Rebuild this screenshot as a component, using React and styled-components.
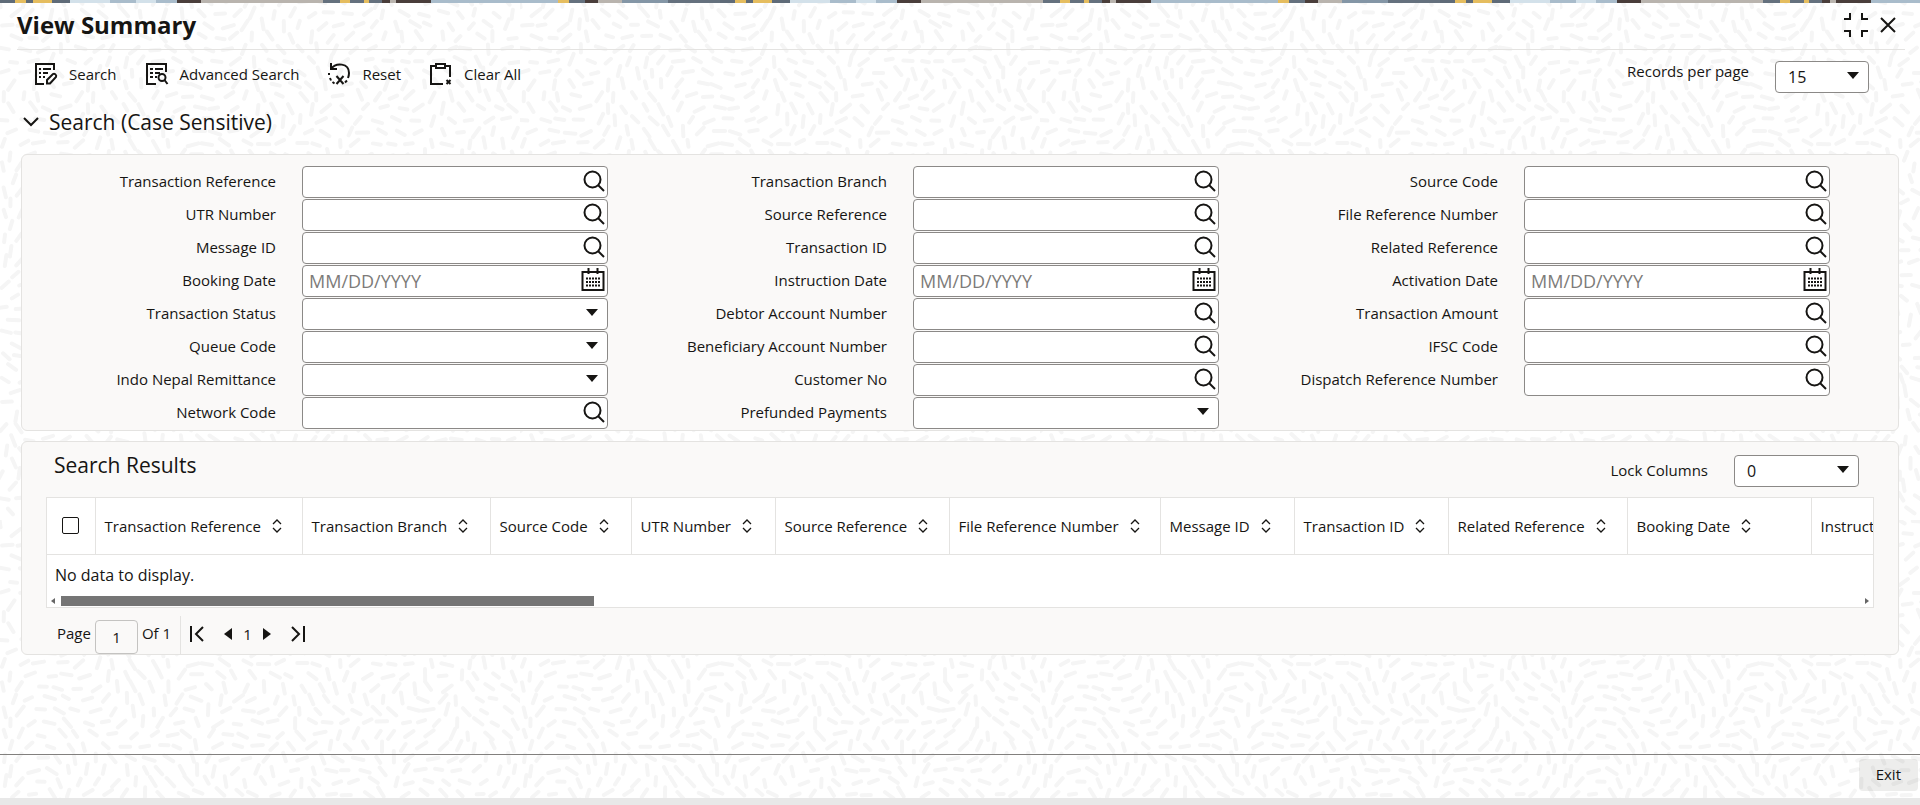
import { useState } from "react";
import styled, { createGlobalStyle, css } from "styled-components";

const ink = "#161513";
const line = "#e4e3e1";

// Paper texture: short strokes that follow a smooth direction field.
// The field is periodic, so the tile repeats without a seam.
const buildTexture = (size) => {
  let seed = 7;
  const random = () => {
    seed = (seed * 16807) % 2147483647;
    return seed / 2147483647;
  };
  const turn = (Math.PI * 2) / size;
  const step = size / 36;
  const strokes = [];
  for (let row = 0; row < 44; row++) {
    for (let col = 0; col < 28; col++) {
      const x = ((col + 0.5 * (row % 2) + random() * 0.4) * size) / 28;
      const y = ((row + random() * 0.3) * size) / 44;
      const angle =
        1.7 * Math.sin(turn * (x + 2 * y)) +
        1.3 * Math.cos(turn * (3 * x - y)) +
        0.7 * Math.sin(turn * (2 * x + 3 * y)) +
        (random() - 0.5) * 0.4;
      const half = step * (0.24 + random() * 0.16);
      const dx = Math.cos(angle) * half;
      const dy = Math.sin(angle) * half;
      strokes.push(
        `M${(x - dx).toFixed(1)} ${(y - dy).toFixed(1)}L${(x + dx).toFixed(1)} ${(y + dy).toFixed(1)}`
      );
    }
  }
  const svg = `<svg xmlns="http://www.w3.org/2000/svg" width="${size}" height="${size}"><path d="${strokes.join("")}" fill="none" stroke="#f5f5f5" stroke-width="4" stroke-linecap="round"/></svg>`;
  return `url("data:image/svg+xml,${encodeURIComponent(svg)}")`;
};

const texture = buildTexture(520);

const searchFields = [
  ["Transaction Reference", "lookup"],
  ["Transaction Branch", "lookup"],
  ["Source Code", "lookup"],
  ["UTR Number", "lookup"],
  ["Source Reference", "lookup"],
  ["File Reference Number", "lookup"],
  ["Message ID", "lookup"],
  ["Transaction ID", "lookup"],
  ["Related Reference", "lookup"],
  ["Booking Date", "date"],
  ["Instruction Date", "date"],
  ["Activation Date", "date"],
  ["Transaction Status", "select"],
  ["Debtor Account Number", "lookup"],
  ["Transaction Amount", "lookup"],
  ["Queue Code", "select"],
  ["Beneficiary Account Number", "lookup"],
  ["IFSC Code", "lookup"],
  ["Indo Nepal Remittance", "select"],
  ["Customer No", "lookup"],
  ["Dispatch Reference Number", "lookup"],
  ["Network Code", "lookup"],
  ["Prefunded Payments", "select"],
];

const columns = [
  ["Transaction Reference", 207],
  ["Transaction Branch", 188],
  ["Source Code", 141],
  ["UTR Number", 144],
  ["Source Reference", 174],
  ["File Reference Number", 211],
  ["Message ID", 134],
  ["Transaction ID", 154],
  ["Related Reference", 179],
  ["Booking Date", 184],
  ["Instruction Date", 190],
];

const Icon = ({ width = 24, height = 24, children, ...rest }) => (
  <svg
    width={width}
    height={height}
    viewBox={`0 0 ${width} ${height}`}
    fill="none"
    stroke="currentColor"
    strokeWidth="2"
    aria-hidden="true"
    {...rest}
  >
    {children}
  </svg>
);

const SearchListIcon = () => (
  <Icon>
    <path d="M20 8V2H2v20h8" />
    <path d="M5 7h2M9 7h8M5 11h2M9 11h5M5 15h2M9 15h2" />
    <path d="M13 21.500v-3.500l6-6c1.500-1 4 1 3 3l-6 6.500z" />
  </Icon>
);

const AdvancedSearchIcon = () => (
  <Icon>
    <path d="M21 10V2H2v20h9" />
    <path d="M5 7h3M10 7h8M5 11h3M10 11h5M5 15h3M10 15h2" />
    <circle cx="17" cy="15.500" r="3.500" />
    <path d="M19.500 18l3 4" />
  </Icon>
);

const ResetIcon = () => (
  <Icon>
    <path d="M4 1v6h6" />
    <path d="M4 7C9 0 22 1 22 11c0 2-.4 3.500-1 5" />
    <path d="M20 18.500l-2 2" />
    <path d="M2 11v2M3 16l1 2.500M5.500 20l2 1.500" />
    <path d="M9.500 14l7 8M16.500 14l-7 8" />
  </Icon>
);

const ClearIcon = () => (
  <Icon>
    <path d="M7 4H2v18h12M16 4h5v11" />
    <rect x="7" y="2" width="9" height="4" />
    <path d="M17.500 18l4 4M21.500 18l-4 4" />
  </Icon>
);

const LookupIcon = () => (
  <Icon width={22} height={22}>
    <circle cx="9.500" cy="9.500" r="8" />
    <path d="M15 15l6 6" />
  </Icon>
);

const CalendarIcon = () => (
  <Icon>
    <path d="M1.500 4h21v18h-21z" />
    <path d="M7.500 0v6M16.500 0v6" />
    <path d="M5 10.500h14M5 14h14M5 17.500h14" strokeDasharray="2 1" />
  </Icon>
);

const SortIcon = () => (
  <Icon width={10} height={14} strokeWidth="1.300">
    <path d="M1 5l4-4 4 4M1 9l4 4 4-4" />
  </Icon>
);

const Triangle = ({ back, width = 8, height = 12 }) => (
  <Icon width={width} height={height} fill="currentColor" stroke="none">
    <path
      d={
        back
          ? `M${width} 0v${height}L0 ${height / 2}z`
          : `M0 0v${height}l${width}-${height / 2}z`
      }
    />
  </Icon>
);

const Field = ({ label, type }) => {
  const id = label.toLowerCase().replaceAll(" ", "-");
  return (
    <FieldRow>
      <FieldLabel htmlFor={id}>{label}</FieldLabel>
      {type === "select" ? (
        <Select id={id} defaultValue="">
          <option value=""></option>
        </Select>
      ) : (
        <InputBox>
          <input
            id={id}
            type="text"
            placeholder={type === "date" ? "MM/DD/YYYY" : undefined}
          />
          <IconButton type="button" aria-label={`${label} ${type}`}>
            {type === "date" ? <CalendarIcon /> : <LookupIcon />}
          </IconButton>
        </InputBox>
      )}
    </FieldRow>
  );
};

const ResultsTable = () => (
  <TableFrame>
    <TableClip>
      <Table>
        <colgroup>
          <col width={48} />
          {columns.map(([name, width]) => (
            <col key={name} width={width} />
          ))}
        </colgroup>
        <thead>
          <tr>
            <CheckCell>
              <input type="checkbox" aria-label="Select all rows" />
            </CheckCell>
            {columns.map(([name]) => (
              <HeadCell key={name}>
                <SortButton>
                  {name}
                  <SortIcon />
                </SortButton>
              </HeadCell>
            ))}
          </tr>
        </thead>
        <tbody>
          <tr>
            <EmptyCell colSpan={columns.length + 1}>
              No data to display.
            </EmptyCell>
          </tr>
        </tbody>
      </Table>
    </TableClip>
    <Scrollbar>
      <Triangle back width={4} height={6} />
      <Track>
        <Thumb />
      </Track>
      <Triangle width={4} height={6} />
    </Scrollbar>
  </TableFrame>
);

const App = () => {
  const [open, setOpen] = useState(true);

  return (
    <>
      <GlobalStyle />
      <Screen>
        <Ribbon />
        <Header>
          <h1>View Summary</h1>
          <WindowButtons>
            <IconButton aria-label="Restore">
              <Icon width={26} height={26}>
                <path d="M1 7h6V1M19 1v6h6M1 19h6v6M19 25v-6h6" />
              </Icon>
            </IconButton>
            <IconButton aria-label="Close">
              <Icon width={16} height={16}>
                <path d="M1 1l14 14M15 1L1 15" />
              </Icon>
            </IconButton>
          </WindowButtons>
        </Header>

        <Toolbar>
          <ToolButton>
            <SearchListIcon />
            Search
          </ToolButton>
          <ToolButton>
            <AdvancedSearchIcon />
            Advanced Search
          </ToolButton>
          <ToolButton>
            <ResetIcon />
            Reset
          </ToolButton>
          <ToolButton>
            <ClearIcon />
            Clear All
          </ToolButton>
          <RecordsPicker>
            <label htmlFor="records">Records per page</label>
            <Select id="records" $width={94} defaultValue="15">
              <option>15</option>
              <option>30</option>
            </Select>
          </RecordsPicker>
        </Toolbar>

        <SectionToggle aria-expanded={open} onClick={() => setOpen(!open)}>
          <Icon width={16} height={10}>
            <path d="M1 1l7 7 7-7" />
          </Icon>
          Search (Case Sensitive)
        </SectionToggle>

        {open && (
          <SearchPanel>
            {searchFields.map(([label, type]) => (
              <Field key={label} label={label} type={type} />
            ))}
          </SearchPanel>
        )}

        <ResultsPanel>
          <ResultsHeader>
            <h2>Search Results</h2>
            <LockPicker>
              <label htmlFor="lock">Lock Columns</label>
              <Select id="lock" $width={125} defaultValue="0">
                <option>0</option>
                <option>1</option>
              </Select>
            </LockPicker>
          </ResultsHeader>
          <ResultsTable />
          <Pager>
            <label htmlFor="page">Page</label>
            <PageInput id="page" type="text" defaultValue="1" />
            <PageTotal>Of 1</PageTotal>
            <PagerButtons>
              <IconButton aria-label="First page">
                <Icon width={14} height={16}>
                  <path d="M1 0v16M13 1L6 8l7 7" />
                </Icon>
              </IconButton>
              <PageStep>
                <IconButton aria-label="Previous page">
                  <Triangle back />
                </IconButton>
                <span>1</span>
                <IconButton aria-label="Next page">
                  <Triangle />
                </IconButton>
              </PageStep>
              <IconButton aria-label="Last page">
                <Icon width={14} height={16}>
                  <path d="M13 0v16M1 1l7 7-7 7" />
                </Icon>
              </IconButton>
            </PagerButtons>
          </Pager>
        </ResultsPanel>

        <Footer>
          <ExitButton>Exit</ExitButton>
        </Footer>
      </Screen>
    </>
  );
};

export default App;

const GlobalStyle = createGlobalStyle`
  * {
    box-sizing: border-box;
  }

  body {
    margin: 0;
    color: ${ink};
    font-family: "Open Sans", "Noto Sans", sans-serif;
    font-size: 15px;
    line-height: 20px;
    background-color: #fff;
  }

  button, input, select {
    font: inherit;
    color: inherit;
  }
`;

const Screen = styled.main`
  min-height: 100vh;
  display: flex;
  flex-direction: column;
  background-image: ${texture};
`;

const Ribbon = styled.div`
  height: 3px;
  background: repeating-linear-gradient(
    90deg,
    #5f6b78 0 15px,
    #e5bd5f 15px 26px,
    #5f6b78 26px 33px,
    #e5bd5f 33px 52px,
    #5f6b78 52px 70px,
    #d3e1ea 70px 110px,
    #a9bccb 110px 136px,
    #d3e1ea 136px 156px,
    #a9bccb 156px 177px,
    #4a3e3b 177px 201px,
    #b9b4ae 201px 323px,
    #65717e 323px 340px,
    #e5bd5f 340px 350px,
    #65717e 350px 364px,
    #e5bd5f 364px 369px,
    #65717e 369px 382px,
    #4a3e3b 382px 390px,
    #b9b4ae 390px 396px,
    #4a3e3b 396px 431px,
    #a9bccb 431px 558px,
    #e5bd5f 558px 569px,
    #65717e 569px 585px,
    #4a3e3b 585px 598px,
    #b9b4ae 598px 622px,
    #8496a6 622px 668px,
    #65717e 668px 720px
  );
`;

const Header = styled.header`
  display: flex;
  justify-content: space-between;
  align-items: center;
  height: 47px;
  margin: 0 15px 0 17px;
  padding-bottom: 2px;
  border-bottom: 1px solid ${line};

  h1 {
    margin: 0;
    font-size: 24px;
    font-weight: 700;
  }
`;

const WindowButtons = styled.div`
  display: flex;
  align-items: center;
  gap: 11px;
  padding-right: 9px;
`;

const IconButton = styled.button`
  display: flex;
  padding: 0;
  border: 0;
  background: none;
  cursor: pointer;
`;

const Toolbar = styled.div`
  display: flex;
  align-items: center;
  gap: 28px;
  height: 50px;
  padding: 0 51px 2px 34px;
`;

const ToolButton = styled(IconButton)`
  align-items: center;
  gap: 11px;
`;

const RecordsPicker = styled.div`
  display: flex;
  align-items: center;
  gap: 26px;
  margin-left: auto;
  padding-top: 6px;

  label {
    padding-bottom: 12px;
  }
`;

const Select = styled.select`
  appearance: none;
  width: ${({ $width }) => ($width ? `${$width}px` : "100%")};
  height: 32px;
  padding: 0 12px;
  border: 1px solid #8b8987;
  border-radius: 4px;
  font-size: 16px;
  background: #fff
    url("data:image/svg+xml,%3Csvg xmlns='http://www.w3.org/2000/svg' width='12' height='7'%3E%3Cpath d='M0 0h12L6 7z' fill='%23161513'/%3E%3C/svg%3E")
    no-repeat right 9px top 10px;
`;

const SectionToggle = styled(IconButton)`
  align-items: center;
  align-self: flex-start;
  gap: 10px;
  height: 44px;
  margin: 0 0 10px 23px;
  font-size: 21px;
`;

const panel = css`
  margin: 0 21px;
  border: 1px solid ${line};
  border-radius: 6px;
  background: #faf9f8;
`;

const SearchPanel = styled.form`
  ${panel}
  display: grid;
  grid-template-columns: repeat(3, 1fr);
  row-gap: 1px;
  padding: 11px 37px 1px 6px;
`;

const FieldRow = styled.div`
  display: grid;
  grid-template-columns: 248fr 306fr;
  align-items: center;
  column-gap: 26px;
  padding-right: 31px;
`;

const FieldLabel = styled.label`
  padding-bottom: 2px;
  text-align: right;
  white-space: nowrap;
`;

const InputBox = styled.div`
  display: flex;
  align-items: center;
  height: 32px;
  padding: 0 2px 2px 6px;
  border: 1px solid #8b8987;
  border-radius: 4px;
  background: #fff;

  input {
    flex: 1;
    min-width: 0;
    padding: 2px 0 0;
    border: 0;
    outline: 0;
    background: none;
    font-size: 18px;

    &::placeholder {
      color: #7d7b79;
    }
  }
`;

const ResultsPanel = styled.section`
  ${panel}
  margin-top: 10px;
  padding: 0 24px;
`;

const ResultsHeader = styled.div`
  display: flex;
  justify-content: space-between;
  height: 55px;
  padding: 13px 15px 0 8px;

  h2 {
    margin: 0;
    font-size: 21px;
    font-weight: 400;
  }
`;

const LockPicker = styled.div`
  display: flex;
  align-items: center;
  align-self: flex-start;
  gap: 26px;

  label {
    padding-bottom: 2px;
  }
`;

const TableFrame = styled.div`
  border: 1px solid ${line};
  background: #fff;
`;

const TableClip = styled.div`
  overflow: hidden;
`;

const Table = styled.table`
  table-layout: fixed;
  width: 100%;
  border-collapse: collapse;
`;

const CheckCell = styled.th`
  padding: 0;
  border-right: 1px solid ${line};
  border-bottom: 1px solid ${line};

  input {
    appearance: none;
    display: block;
    width: 17px;
    height: 17px;
    margin: 0 auto;
    border: 1px solid ${ink};
    border-radius: 2px;
  }
`;

const HeadCell = styled.th`
  height: 56px;
  padding: 0 0 0 9px;
  border-right: 1px solid ${line};
  border-bottom: 1px solid ${line};
  font-weight: 400;
  white-space: nowrap;
`;

const SortButton = styled(IconButton)`
  align-items: center;
  gap: 11px;
`;

const EmptyCell = styled.td`
  height: 41px;
  padding: 0 8px;
  font-size: 16px;
`;

const Scrollbar = styled.div`
  display: flex;
  align-items: center;
  gap: 6px;
  height: 12px;
  padding: 0 4px;
  color: #666;
`;

const Track = styled.div`
  flex: 1;
`;

const Thumb = styled.div`
  width: calc(100% * 8 / 27);
  height: 10px;
  background: #757575;
`;

const Pager = styled.div`
  display: flex;
  align-items: center;
  height: 46px;
  padding: 0 11px;

  label {
    padding-top: 4px;
  }
`;

const PageInput = styled.input`
  width: 43px;
  height: 34px;
  margin: 12px 4px 0;
  padding: 0;
  border: 1px solid #c4c3c1;
  border-radius: 4px;
  background: none;
  text-align: center;
`;

const PageTotal = styled.span`
  margin-right: 9px;
  padding-top: 4px;
`;

const PagerButtons = styled.div`
  display: flex;
  align-items: center;
  align-self: flex-end;
  gap: 20px;
  height: 38px;
  padding: 0 0 2px 9px;
  border-left: 1px solid ${line};
`;

const PageStep = styled.div`
  display: flex;
  align-items: center;
  gap: 11px;
`;

const Footer = styled.footer`
  display: flex;
  justify-content: flex-end;
  margin-top: auto;
  padding: 4px 2px 7px;
  border-top: 1px solid #82807e;
  border-bottom: 7px solid #e8e8e8;
`;

const ExitButton = styled.button`
  padding: 5px 17px 7px;
  border: 0;
  border-radius: 4px;
  background: rgba(22, 21, 19, 0.08);
  cursor: pointer;
`;
